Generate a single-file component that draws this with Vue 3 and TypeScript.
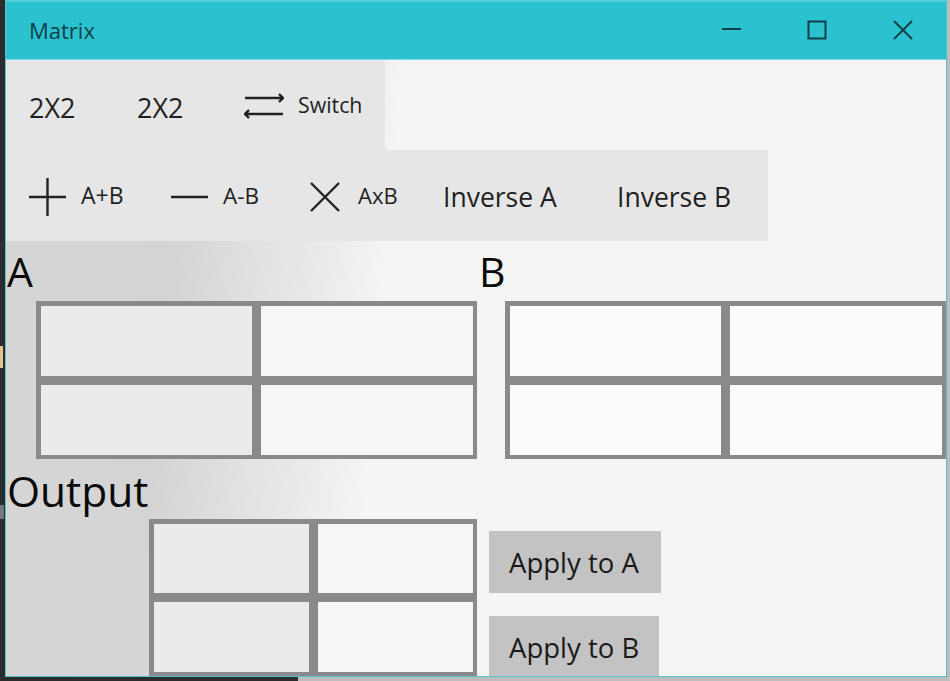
<script setup lang="ts">
const cells = [0, 1, 2, 3]
</script>

<template>
  <div class="screen">
    <div class="window">
      <header class="titlebar">
        <span class="title">Matrix</span>
        <div class="controls">
          <svg class="ctl" width="86" height="58" viewBox="0 0 86 58"><path d="M34 29h19" /></svg>
          <svg class="ctl" width="86" height="58" viewBox="0 0 86 58"><rect x="34.5" y="21.5" width="17" height="17" /></svg>
          <svg class="ctl" width="86" height="58" viewBox="0 0 86 58"><path d="M34 21l18 18M52 21L34 39" /></svg>
        </div>
      </header>
      <main class="body">
        <div class="toolbar first">
          <button class="tool size">2X2</button>
          <button class="tool size">2X2</button>
          <button class="tool switch">
            <svg width="40" height="34" viewBox="0 0 40 34"><path d="M1 10h38M35 6l4 4-4 4M39 26H1M5 22l-4 4 4 4" /></svg>
            <span>Switch</span>
          </button>
        </div>
        <div class="toolbar second">
          <button class="tool op plus">
            <svg width="40" height="40" viewBox="0 0 40 40"><path d="M1 20h37M19.5 1v38" /></svg>
            <span>A+B</span>
          </button>
          <button class="tool op minus">
            <svg width="40" height="40" viewBox="0 0 40 40"><path d="M1 20h37" /></svg>
            <span>A-B</span>
          </button>
          <button class="tool op times">
            <svg width="32" height="32" viewBox="0 0 32 32"><path d="M2 2l28 28M30 2L2 30" /></svg>
            <span>AxB</span>
          </button>
          <button class="tool inv inv-a">Inverse A</button>
          <button class="tool inv inv-b">Inverse B</button>
        </div>
        <div class="inputs">
          <section class="panel panel-a">
            <h2 class="letter">A</h2>
            <div class="matrix big"><input v-for="c in cells" :key="c" class="cell" type="text" /></div>
          </section>
          <section class="panel panel-b">
            <h2 class="letter">B</h2>
            <div class="matrix big"><input v-for="c in cells" :key="c" class="cell" type="text" /></div>
          </section>
        </div>
        <h2 class="output-label">Output</h2>
        <div class="output">
          <div class="matrix small"><input v-for="c in cells" :key="c" class="cell" type="text" /></div>
          <div class="actions">
            <button class="apply apply-a">Apply to A</button>
            <button class="apply apply-b">Apply to B</button>
          </div>
        </div>
      </main>
    </div>
  </div>
</template>

<style>
html, body { margin: 0; padding: 0; background: #2b2b2b; }
</style>

<style scoped>
.screen {
  width: 950px;
  height: 681px;
  overflow: hidden;
  box-sizing: border-box;
  padding: 0 3px 4px 5px;
  background:
    linear-gradient(#e8c08a, #e8c08a) 0 346px / 3px 22px no-repeat,
    linear-gradient(#777, #777) 0 505px / 4px 14px no-repeat,
    linear-gradient(to right, #2c2c2c 0 298px, #bdbdbd 298px);
  font-family: "Open Sans", "Noto Sans", sans-serif;
  color: #1a1a1a;
}
.window {
  height: 100%;
  box-sizing: border-box;
  border: 1px solid #4fc4cd;
  border-top: 0;
  display: flex;
  flex-direction: column;
  overflow: hidden;
}
.titlebar {
  height: 60px;
  flex: none;
  box-sizing: border-box;
  background: #2ac2ce;
  border-top: 2px solid #55d0d9;
  border-bottom: 1px solid #7fdbe1;
  display: flex;
  justify-content: space-between;
  align-items: center;
  padding-left: 23px;
}
.title { font-size: 22px; color: #0d3f49; margin-top: -2px; }
.controls { display: flex; margin-top: -3px; }
.ctl { display: block; }
.ctl path, .ctl rect { fill: none; stroke: #0d3f49; stroke-width: 2; }
.body {
  flex: 1;
  min-height: 0;
  display: flex;
  flex-direction: column;
  background: linear-gradient(95deg, #d6d6d6 0, #d4d4d4 180px, #e4e4e4 290px, #f5f5f5 400px);
}
.toolbar { display: flex; background: #e6e6e6; flex: none; align-self: flex-start; box-sizing: border-box; }
.first { height: 90px; width: 379px; }
.second { height: 91px; width: 762px; padding-top: 2px; }
.tool {
  border: 0;
  padding: 0;
  margin: 0;
  background: none;
  font-family: inherit;
  color: #1f1f1f;
  display: flex;
  align-items: center;
  height: 100%;
  text-align: left;
}
.size { width: 108px; padding-left: 23px; box-sizing: border-box; font-size: 27px; padding-top: 5px; }
.switch { width: 163px; padding-left: 22px; box-sizing: border-box; font-size: 21.3px; gap: 14px; }
.switch svg, .op svg { display: block; flex: none; }
.switch svg path, .op svg path { fill: none; stroke: #222; stroke-width: 2.4; }
.switch span { margin-bottom: 2px; }
.op { box-sizing: border-box; font-size: 22.5px; }
.op span { margin-bottom: 3px; }
.plus { width: 141px; padding-left: 22px; gap: 13px; font-size: 23px; }
.minus { width: 140px; padding-left: 23px; gap: 13px; }
.times { width: 150px; padding-left: 22px; gap: 17px; font-size: 22px; }
.inv { font-size: 26.5px; box-sizing: border-box; }
.inv-a { width: 180px; padding-left: 6px; }
.inv-b { width: 150px; }
.inputs { display: flex; flex: none; }
.panel { box-sizing: border-box; }
.panel-a { width: 471px; }
.panel-b { width: 469px; }
.letter, .output-label { margin: 0; font-weight: 400; font-size: 41px; line-height: 60px; color: #0a0a0a; }
.panel-a .letter { padding-left: 1px; }
.panel-b .letter { padding-left: 2px; }
.matrix {
  display: grid;
  grid-template-columns: 1fr 1fr;
  grid-template-rows: 1fr 1fr;
  gap: 9px;
  padding: 4.5px;
  box-sizing: border-box;
  background: #8a8a8a;
}
.big { width: 441px; height: 158px; }
.panel-a .matrix { margin-left: 30px; }
.panel-b .matrix { margin-left: 28px; }
.cell {
  min-width: 0;
  width: 100%;
  height: 100%;
  box-sizing: border-box;
  border: 0;
  padding: 0;
  margin: 0;
  background: #ebebeb;
}
.cell:nth-child(even) { background: #f6f6f6; }
.panel-b .cell { background: #fbfbfb; }
.output-label { padding-left: 1px; font-size: 42.5px; line-height: 64px; flex: none; height: 60px; }
.output { display: flex; flex: none; padding-left: 143px; }
.small { width: 328px; height: 157px; flex: none; }
.actions { display: flex; flex-direction: column; margin: 12px 0 0 12px; gap: 23px; }
.apply {
  border: 0;
  margin: 0;
  padding: 1px 0 0 20px;
  background: #c3c3c3;
  font-family: inherit;
  font-size: 27.5px;
  color: #1a1a1a;
  height: 62px;
  text-align: left;
  box-sizing: border-box;
  white-space: nowrap;
}
.apply-a { width: 172px; }
.apply-b { width: 170px; }
</style>
